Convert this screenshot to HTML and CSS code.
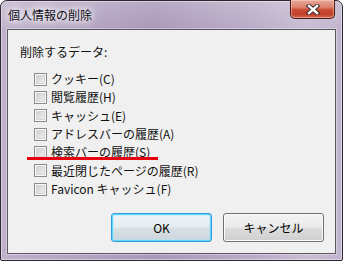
FILE: index.html
```html
<!DOCTYPE html>
<html lang="ja">
<head>
<meta charset="utf-8">
<link rel="stylesheet" href="styles.css">
</head>
<body>
<div class="window">
  <div class="titlebar">
    <span class="title">個人情報の削除</span>
    <span class="close">
      <svg width="14" height="11" viewBox="0 0 14 11">
        <path d="M3 2 L11 9 M11 2 L3 9" stroke="#3a2a2a" stroke-width="4.4" stroke-linecap="square" fill="none"/>
        <path d="M3 2 L11 9 M11 2 L3 9" stroke="#ffffff" stroke-width="2.4" stroke-linecap="square" fill="none"/>
      </svg>
    </span>
  </div>
  <div class="client">
    <div class="label">削除するデータ:</div>
    <ul class="list">
      <li class="row"><span class="check"></span><span>クッキー(C)</span></li>
      <li class="row"><span class="check"></span><span>閲覧履歴(H)</span></li>
      <li class="row"><span class="check"></span><span>キャッシュ(E)</span></li>
      <li class="row"><span class="check"></span><span>アドレスバーの履歴(A)</span></li>
      <li class="row marked"><span class="check"></span><span>検索バーの履歴(S)</span><span class="redline"></span></li>
      <li class="row"><span class="check"></span><span>最近閉じたページの履歴(R)</span></li>
      <li class="row"><span class="check"></span><span>Favicon キャッシュ(F)</span></li>
    </ul>
    <div class="buttons">
      <button class="btn default">OK</button>
      <button class="btn">キャンセル</button>
    </div>
  </div>
</div>
</body>
</html>
```
FILE: styles.css
```css
* { box-sizing: border-box; }
html, body {
  margin: 0;
  padding: 0;
  background: #ffffff;
}
body {
  font-family: "Noto Sans CJK JP", "Noto Sans", sans-serif;
  font-size: 12px;
  color: #111111;
}
.window {
  width: 343px;
  height: 261px;
  border: 1px solid #2a2530;
  border-radius: 7px 7px 2px 2px;
  padding: 0 6px 6px 6px;
  display: flex;
  flex-direction: column;
  background:
    linear-gradient(180deg, rgba(255,255,255,0.18) 0px, rgba(255,255,255,0) 30px),
    linear-gradient(90deg, #bfb1cb 0%, #b7a8c4 15%, #b0a0bf 30%, #a998b9 45%, #b2a2c0 60%, #bbadc8 75%, #c8bdd3 90%, #c0b3cc 100%);
  box-shadow: inset 0 0 0 1px rgba(255,255,255,0.45);
}
.titlebar {
  height: 28px;
  display: flex;
  align-items: center;
  justify-content: space-between;
}
.title {
  padding-left: 1px;
  line-height: 16px;
  font-size: 12px;
  color: #101018;
  text-shadow: 0 0 6px #ffffff, 0 0 10px rgba(255,255,255,0.9), 0 0 14px rgba(255,255,255,0.8);
}
.close {
  align-self: flex-start;
  margin-top: -1px;
  margin-right: 1px;
  width: 45px;
  height: 19px;
  border: 1px solid #4a1810;
  border-top: none;
  border-radius: 0 0 5px 5px;
  background: linear-gradient(180deg, #e9a99a 0%, #dd8270 40%, #c94a33 55%, #c1402a 80%, #d46a4f 100%);
  box-shadow: inset 0 0 0 1px rgba(255,220,210,0.45);
  display: flex;
  align-items: center;
  justify-content: center;
}
.close svg { display: block; }
.client {
  flex: 1;
  border: 1px solid #5a5663;
  background: #f0f0f0;
  box-shadow: 0 0 0 1px rgba(255,255,255,0.35);
  display: flex;
  flex-direction: column;
  padding: 13px 11px 11px 0;
}
.label {
  padding-left: 12px;
  line-height: 18px;
  height: 18px;
}
.list {
  list-style: none;
  margin: 9px 0 0 0;
  padding: 0;
}
.row {
  height: 18.33px;
  display: flex;
  align-items: center;
  gap: 4px;
  padding-left: 26px;
  line-height: 18px;
  white-space: nowrap;
}
.marked { position: relative; }
.check {
  width: 13px;
  height: 13px;
  flex: none;
  border: 1px solid #8a8b8b;
  background: linear-gradient(135deg, #c8c8c8 0%, #e2e2e2 55%, #f4f4f4 100%);
  box-shadow: inset 0 0 0 1px #f8f8f8, inset 0 0 0 2px #d6d6d6;
}
.redline {
  position: absolute;
  left: 19px;
  top: 13.7px;
  width: 131px;
  height: 3px;
  background: #e8000e;
}
.buttons {
  margin-top: auto;
  display: flex;
  justify-content: flex-end;
  gap: 11px;
}
.btn {
  width: 101px;
  height: 29px;
  font-family: "Noto Sans CJK JP", "Noto Sans", sans-serif;
  font-size: 12px;
  color: #000;
  border: 1px solid #707070;
  border-radius: 3px;
  padding: 0;
  background: linear-gradient(180deg, #f2f2f2 0%, #ebebeb 48%, #dddddd 52%, #cfcfcf 100%);
  box-shadow: inset 0 0 0 1px #fbfbfb;
}
.btn.default {
  border-color: #3399dd;
  background: linear-gradient(180deg, #eef4f7 0%, #e6edf1 48%, #d8e0e4 52%, #ccd6db 100%);
  box-shadow: inset 0 0 0 1px #5fd6fb, inset 0 0 0 2px rgba(160,230,250,0.45);
}
```
